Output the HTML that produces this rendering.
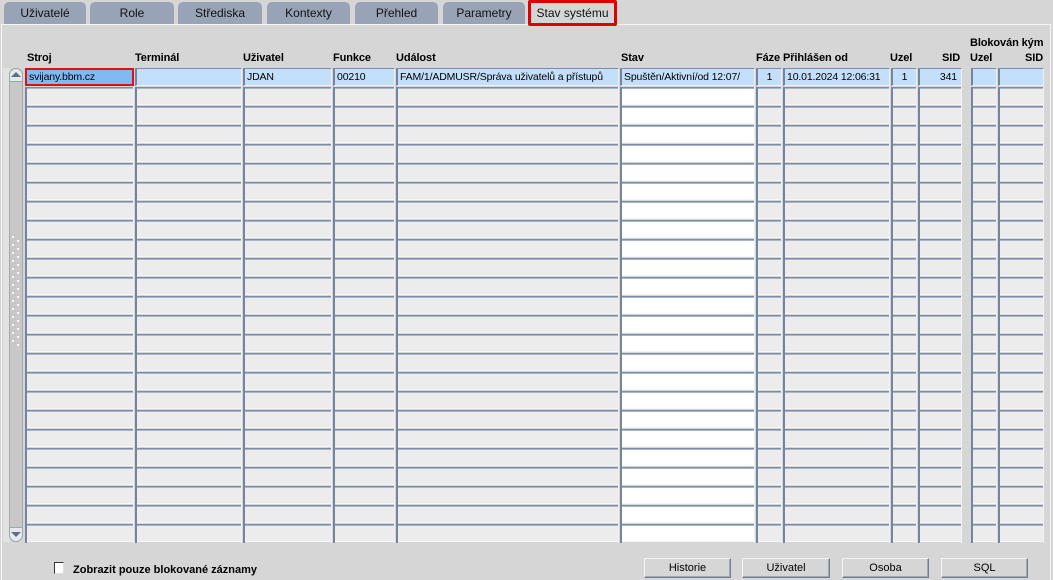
<!DOCTYPE html>
<html><head><meta charset="utf-8">
<style>
*{margin:0;padding:0;box-sizing:border-box}
body{width:1053px;height:580px;background:#d6d6d6;font-family:"Liberation Sans",Arial,sans-serif;font-size:11px;color:#000;position:relative;overflow:hidden}
.tab{position:absolute;top:2px;height:22px;background:#98a4b6;border-radius:5px 5px 0 0;text-align:center;line-height:23px;font-size:12px;color:#111}
.tab.sel{background:#d6d6d6;border:3px solid #e00000;border-radius:2px;line-height:20px;top:0px;height:26px}
.panel{position:absolute;left:1px;top:24px;width:1050px;height:556px;border-left:1px solid #f4f4f4;border-top:1px solid #f4f4f4;border-right:1px solid #f4f4f4;background:#d6d6d6}
.h{position:absolute;font-weight:bold;font-size:11px;letter-spacing:-0.1px}
.col{position:absolute;top:87px;height:456px;background:repeating-linear-gradient(to bottom,#7d8da6 0 1px,#aab6c6 1px 2px,#ececec 2px 17px,#f6f6f6 17px 18px,#d6d6d6 18px 19px);box-shadow:inset 2px 0 0 #7485a0, inset -1px 0 0 #f2f2f2}
.col.w{background:repeating-linear-gradient(to bottom,#7d8da6 0 1px,#aab6c6 1px 2px,#fff 2px 17px,#f6f6f6 17px 18px,#d6d6d6 18px 19px)}
.c{position:absolute;top:68px;height:18px;background:#c3dff9;border-top:1px solid #7d8da6;border-left:2px solid #7485a0;border-right:1px solid #eef;border-bottom:1px solid #eef;line-height:17px;padding-left:2px;white-space:nowrap;overflow:hidden;font-size:10.5px;letter-spacing:-0.15px}
.r{text-align:right;padding-right:4px}
.btn{position:absolute;top:558px;height:20px;border:1px solid #6f7d92;border-top-color:#f4f4f4;border-left-color:#f4f4f4;box-shadow:inset -1px -1px 0 #a0a8b4;text-align:center;line-height:19px;font-size:11px}
</style></head><body>
<div class="panel"></div>
<div class="tab" style="left:4px;width:82px">Uživatelé</div>
<div class="tab" style="left:90px;width:84px">Role</div>
<div class="tab" style="left:178px;width:84px">Střediska</div>
<div class="tab" style="left:267px;width:83px">Kontexty</div>
<div class="tab" style="left:355px;width:83px">Přehled</div>
<div class="tab" style="left:443px;width:82px">Parametry</div>
<div class="tab sel" style="left:528px;width:89px">Stav systému</div>

<div class="h" style="left:27px;top:52px">Stroj</div>
<div class="h" style="left:135px;top:52px">Terminál</div>
<div class="h" style="left:243px;top:52px">Uživatel</div>
<div class="h" style="left:333px;top:52px">Funkce</div>
<div class="h" style="left:396px;top:52px">Událost</div>
<div class="h" style="left:621px;top:52px">Stav</div>
<div class="h" style="left:756px;top:52px">Fáze</div>
<div class="h" style="left:783px;top:52px">Přihlášen od</div>
<div class="h" style="left:890px;top:52px">Uzel</div>
<div class="h" style="left:942px;top:52px">SID</div>
<div class="h" style="left:970px;top:37px">Blokován kým</div>
<div class="h" style="left:970px;top:52px">Uzel</div>
<div class="h" style="left:1025px;top:52px">SID</div>

<!-- scrollbar -->
<div style="position:absolute;left:3px;top:68px;width:7px;height:474px;background:#e2e2e2"></div>
<div style="position:absolute;left:9px;top:68px;width:14px;height:474px;background:#c8c8c8;border:1px solid #a8a8a8;border-radius:7px;"></div>
<div style="position:absolute;left:9px;top:68px;width:14px;height:14px;background:#e6e8ee;border:1px solid #9aa;border-radius:7px 7px 0 0"></div>
<div style="position:absolute;left:11px;top:72px;width:0;height:0;border-left:5px solid transparent;border-right:5px solid transparent;border-bottom:5px solid #5e6e86"></div>
<div style="position:absolute;left:9px;top:527px;width:14px;height:15px;background:#e6e8ee;border:1px solid #9aa;border-radius:0 0 7px 7px"></div>
<div style="position:absolute;left:11px;top:532px;width:0;height:0;border-left:5px solid transparent;border-right:5px solid transparent;border-top:5px solid #5e6e86"></div>
<div style="position:absolute;left:12px;top:236px;width:2px;height:112px;background:repeating-linear-gradient(to bottom,#f8f8f8 0 2px,transparent 2px 8px)"></div>
<div style="position:absolute;left:17px;top:240px;width:2px;height:108px;background:repeating-linear-gradient(to bottom,#f8f8f8 0 2px,transparent 2px 8px)"></div>

<!-- empty columns -->
<div class="col" style="left:25px;width:109px"></div>
<div class="col" style="left:135px;width:107px"></div>
<div class="col" style="left:243px;width:89px"></div>
<div class="col" style="left:333px;width:62px"></div>
<div class="col" style="left:396px;width:223px"></div>
<div class="col w" style="left:620px;width:135px"></div>
<div class="col" style="left:756px;width:26px"></div>
<div class="col" style="left:783px;width:107px"></div>
<div class="col" style="left:891px;width:26px"></div>
<div class="col" style="left:918px;width:44px"></div>
<div class="col" style="left:971px;width:26px"></div>
<div class="col" style="left:998px;width:46px"></div>

<!-- first row -->
<div class="c" style="left:25px;width:109px;background:#7fbaf2;border:2px solid #e01010;line-height:15px">svijany.bbm.cz</div>
<div class="c" style="left:135px;width:107px"></div>
<div class="c" style="left:243px;width:89px">JDAN</div>
<div class="c" style="left:333px;width:62px">00210</div>
<div class="c" style="left:396px;width:223px">FAM/1/ADMUSR/Správa uživatelů a přístupů</div>
<div class="c" style="left:620px;width:135px">Spuštěn/Aktivní/od 12:07/</div>
<div class="c" style="left:756px;width:26px;text-align:center;padding:0">1</div>
<div class="c" style="left:783px;width:107px">10.01.2024 12:06:31</div>
<div class="c" style="left:891px;width:26px;text-align:center;padding:0">1</div>
<div class="c r" style="left:918px;width:44px">341</div>
<div class="c" style="left:971px;width:26px"></div>
<div class="c" style="left:998px;width:46px"></div>

<!-- bottom -->
<div style="position:absolute;left:54px;top:562px;width:10px;height:12px;background:#fff;border:1px solid #333;border-right-color:#ddd;border-bottom-color:#ddd"></div>
<div style="position:absolute;left:73px;top:564px;font-weight:bold;font-size:11px">Zobrazit pouze blokované záznamy</div>
<div class="btn" style="left:644px;width:87px">Historie</div>
<div class="btn" style="left:742px;width:88px">Uživatel</div>
<div class="btn" style="left:842px;width:87px">Osoba</div>
<div class="btn" style="left:941px;width:87px">SQL</div>
</body></html>
